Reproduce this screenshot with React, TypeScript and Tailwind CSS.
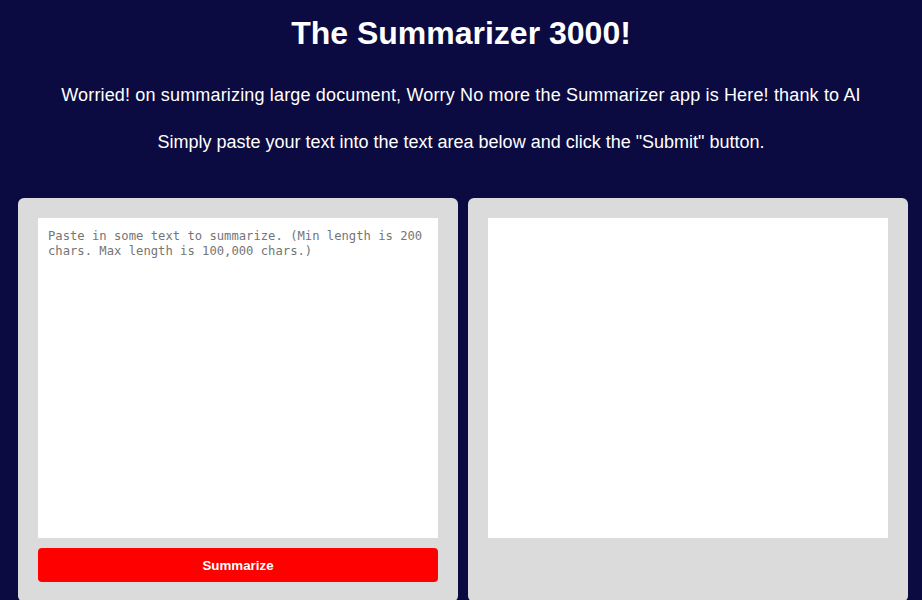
import { useState } from 'react';

export default function App() {
  const [text, setText] = useState('');
  const [summary] = useState('');

  return (
    <div className="min-h-screen bg-[#0b0b41] font-['Liberation_Sans',Arial,sans-serif] text-white overflow-hidden">
      <h1 className="pt-[15px] text-center text-[32px] leading-[37px] font-bold">The Summarizer 3000!</h1>
      <p className="mt-[33px] text-center text-[18px] leading-[21px] tracking-[0.16px]">
        Worried! on summarizing large document, Worry No more the Summarizer app is Here! thank to AI
      </p>
      <p className="mt-[26px] text-center text-[18px] leading-[21px]">
        Simply paste your text into the text area below and click the "Submit" button.
      </p>

      <div className="mt-[45px] pl-[18px] grid grid-cols-[440px_440px] gap-[10px]">
        <div className="bg-[#dbdbdb] rounded-[6px] p-5 flex flex-col gap-[10px]">
          <textarea
            value={text}
            onChange={(e) => setText(e.target.value)}
            placeholder="Paste in some text to summarize. (Min length is 200 chars. Max length is 100,000 chars.)"
            className="h-[320px] w-full resize-none bg-white px-[10px] pt-[11px] pb-[10px] text-[12.2px] leading-[15px] text-black font-['DejaVu_Sans_Mono',monospace] placeholder:text-[#757575] outline-none"
          />
          <button className="h-[34px] w-full rounded-[4px] bg-[#ff0000] pt-[1px] text-[13.33px] font-bold text-white">
            Summarize
          </button>
        </div>
        <div className="bg-[#dbdbdb] rounded-[6px] p-5">
          <div className="h-[320px] w-full bg-white p-[10px] text-[12px] text-black">{summary}</div>
        </div>
      </div>
    </div>
  );
}
